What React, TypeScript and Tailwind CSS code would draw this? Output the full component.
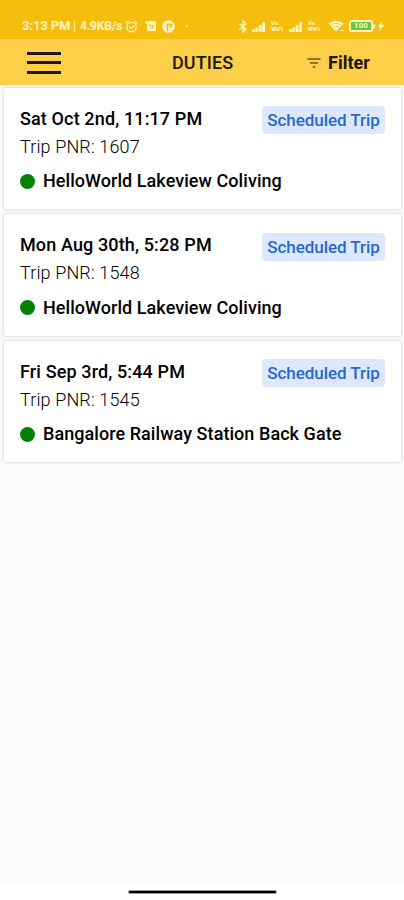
type Duty = { date: string; pnr: number; place: string };

const duties: Duty[] = [
  { date: "Sat Oct 2nd, 11:17 PM", pnr: 1607, place: "HelloWorld Lakeview Coliving" },
  { date: "Mon Aug 30th, 5:28 PM", pnr: 1548, place: "HelloWorld Lakeview Coliving" },
  { date: "Fri Sep 3rd, 5:44 PM", pnr: 1545, place: "Bangalore Railway Station Back Gate" },
];

function Signal() {
  return (
    <svg width="14" height="11" viewBox="0 0 14 11" fill="currentColor" className="shrink-0">
      <rect x="0" y="8.3" width="2.8" height="2.7" />
      <rect x="3.4" y="6.5" width="2.8" height="4.5" />
      <rect x="6.8" y="4" width="2.8" height="7" />
      <rect x="10.2" y="1" width="2.8" height="10" />
    </svg>
  );
}

function VoWifi() {
  return (
    <div className="w-[14px] shrink-0 text-[6px] leading-[6px] font-black whitespace-nowrap">
      <div>Vo</div>
      <div>WiFi</div>
    </div>
  );
}

function StatusBar() {
  return (
    <div className="h-[39px] bg-[#f5bd0c] pt-[13px] text-[#fff3c4]">
      <div className="flex h-[26px] items-center pl-[22px]">
        <div className="flex w-[103px] shrink-0 items-center text-[13px] font-bold whitespace-nowrap">
          <span className="w-[51px] tracking-[-0.1px]">3:13 PM</span>
          <span className="w-[7px] font-normal">|</span>
          <span className="text-[12px] tracking-[-0.15px]">4.9KB/s</span>
        </div>
        <svg width="13" height="13" viewBox="0 0 13 13" fill="none" stroke="currentColor" strokeWidth="1.3" className="shrink-0">
          <circle cx="6.5" cy="7" r="4.7" />
          <path d="M.8 3.3 3.5 1M12.2 3.3 9.5 1M4.3 6.8l1.8 1.7 2.8-2.8" />
        </svg>
        <svg width="13" height="12" viewBox="0 0 13 12" fill="none" className="ml-[6px] shrink-0">
          <path d="M1 1h11v2.4H1zM3 3h9v8H3z" fill="currentColor" />
          <path d="M4.6 5h2.3v3.5M8.5 8.5V5h1.8" stroke="#f5bd0c" strokeWidth=".9" />
        </svg>
        <svg width="13" height="13" viewBox="0 0 13 13" className="ml-[5px] shrink-0">
          <circle cx="6.5" cy="6.5" r="6.3" fill="currentColor" />
          <path d="M5.5 11V4.2h4v2.3H7.5" fill="none" stroke="#f5bd0c" strokeWidth="1.5" />
        </svg>
        <div className="ml-[11px] size-[2px] shrink-0 rounded-full bg-current" />
        <svg width="10" height="13" viewBox="0 0 10 13" fill="none" stroke="currentColor" strokeWidth="1.3" className="ml-[50px] shrink-0">
          <path d="M1.5 3.7 8 9.2 5 12V1l3 2.8L1.5 9.3" />
        </svg>
        <div className="ml-[4px] flex items-center">
          <Signal />
          <div className="ml-[5px]"><VoWifi /></div>
          <div className="ml-[4px]"><Signal /></div>
          <div className="ml-[5px]"><VoWifi /></div>
        </div>
        <svg width="17" height="12" viewBox="0 0 17 12" className="ml-[6px] shrink-0">
          <path d="M8 11.5.5 3.7C5-.2 11-.2 15.5 3.7L8 11.5Z" fill="currentColor" />
          <path d="M2.5 5.3c3.3-2.7 7.7-2.7 11 0M4.7 7.5c2-1.7 4.6-1.7 6.6 0" fill="none" stroke="#f5bd0c" strokeWidth=".8" />
          <path d="M12 10.5h4" stroke="currentColor" strokeWidth="1" />
        </svg>
        <div className="ml-[4px] flex h-[12px] w-[24px] shrink-0 items-center justify-center rounded-[3px] border-2 border-current">
          <div className="flex h-[8px] w-[20px] items-center justify-center bg-[#6fc63c] text-[8px] leading-[8px] font-bold">100</div>
        </div>
        <div className="h-[5px] w-[2px] shrink-0 rounded-r bg-current" />
        <svg width="8" height="12" viewBox="0 0 8 12" fill="currentColor" className="ml-[2px] shrink-0">
          <path d="M5.5 1 .6 7h2.7L2 11.2 7.4 5H4.5z" />
        </svg>
      </div>
    </div>
  );
}

function Header() {
  return (
    <div className="flex h-[46px] items-center bg-[#fdce47] text-[#1b1712]">
      <button aria-label="Open menu" className="ml-[27px] flex w-[34px] flex-col gap-[6.5px] pt-[1px]">
        <span className="h-[3px] w-full bg-[#1b1712]" />
        <span className="h-[3px] w-full bg-[#1b1712]" />
        <span className="h-[3px] w-full bg-[#1b1712]" />
      </button>
      <h1 className="ml-[111px] w-[62px] pt-px text-[18px] font-medium tracking-[0.1px] whitespace-nowrap">DUTIES</h1>
      <button className="ml-[73px] flex items-center pt-px text-[18px] font-bold">
        <svg width="14" height="10" viewBox="0 0 14 10" fill="none" stroke="currentColor" strokeWidth="1.2" className="mr-[7px]">
          <path d="M.5 1h13M3 5h8M5.7 9h2.6" />
        </svg>
        Filter
      </button>
    </div>
  );
}

function DutyCard({ duty }: { duty: Duty }) {
  return (
    <div className="flex h-[121.5px] flex-col rounded-[2px] bg-white pt-[17px] pr-[16px] pl-[16px] shadow-[0_0_3px_rgba(0,0,0,0.22)]">
      <div className="flex items-start justify-between">
        <div className="whitespace-nowrap text-black">
          <div className="text-[18px] leading-[28px] font-medium tracking-[0.13px]">{duty.date}</div>
          <div className="text-[18px] leading-[28px] font-light tracking-[0.13px]">Trip PNR: {duty.pnr}</div>
        </div>
        <div className="mt-[1.5px] h-[28px] w-[123px] rounded-[4px] bg-[#dde9fa] text-center text-[17px] leading-[28px] font-medium tracking-[-0.05px] whitespace-nowrap text-[#2568cf]">
          Scheduled Trip
        </div>
      </div>
      <div className="mt-[6.5px] flex items-center">
        <div className="size-[15px] rounded-full bg-[#058205]" />
        <div className="ml-[8px] text-[18px] leading-[28px] font-medium tracking-[0.06px] whitespace-nowrap text-black">{duty.place}</div>
      </div>
    </div>
  );
}

export default function App() {
  return (
    <div className="flex h-[900px] w-[404px] flex-col overflow-hidden bg-[#fafafa] font-['Roboto',sans-serif]">
      <StatusBar />
      <Header />
      <div className="flex flex-1 flex-col gap-[5px] pt-[2.7px] pr-[3px] pl-[4px]">
        {duties.map((d) => (
          <DutyCard key={d.pnr} duty={d} />
        ))}
      </div>
      <div className="flex h-[16px] justify-center bg-white pt-[6px]">
        <div className="h-[4px] w-[149px] rounded-full border border-[#999] bg-black" />
      </div>
    </div>
  );
}
